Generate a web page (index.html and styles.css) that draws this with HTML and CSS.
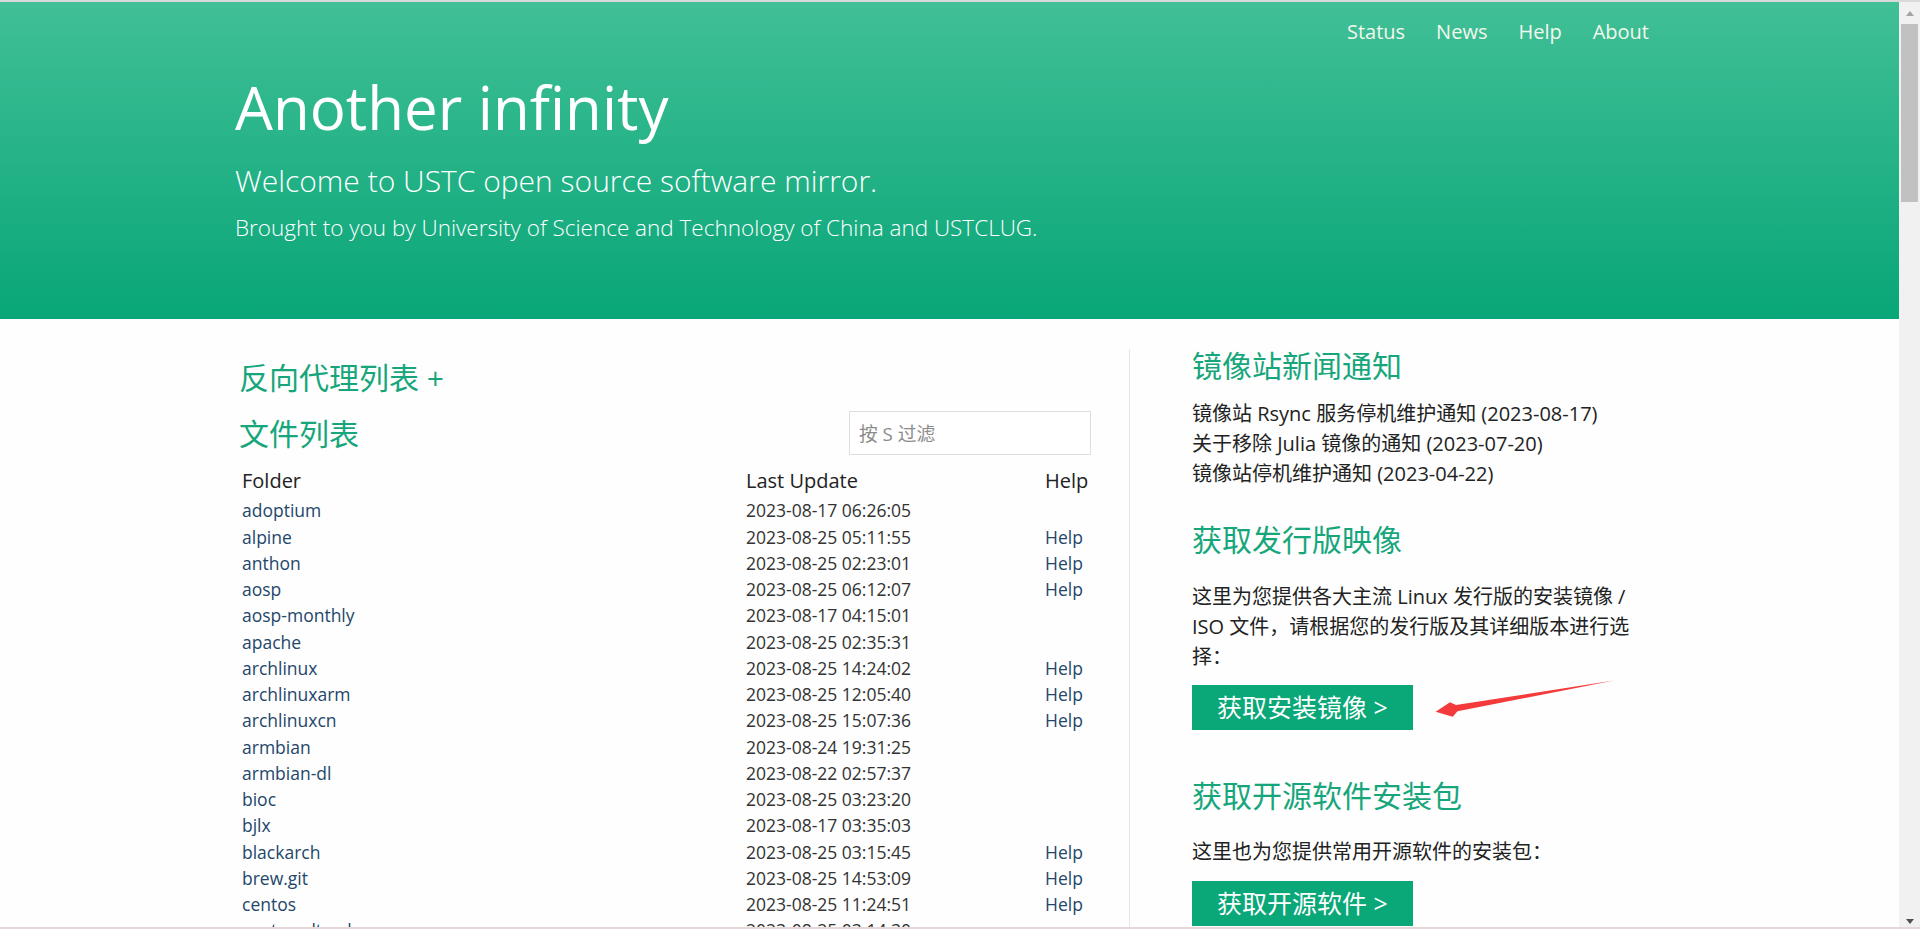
FILE: index.html
```html
<!DOCTYPE html>
<html lang="zh-CN">
<head>
<meta charset="utf-8">
<title>USTC Open Source Software Mirror</title>
<link rel="stylesheet" href="styles.css">
</head>
<body>
<div class="frame-top"></div>
<div class="viewport">
  <div class="page">
    <header class="hero">
      <nav class="container nav">
        <a href="#">Status</a>
        <a href="#">News</a>
        <a href="#">Help</a>
        <a href="#">About</a>
      </nav>
      <div class="container hero-text">
        <h1>Another infinity</h1>
        <p class="lead">Welcome to USTC open source software mirror.</p>
        <p class="sub">Brought to you by University of Science and Technology of China and USTCLUG.</p>
      </div>
    </header>
    <main class="container content">
      <section class="list-col">
        <h2 class="title proxy">反向代理列表 +</h2>
        <div class="list-head">
          <h2 class="title">文件列表</h2>
          <input class="filter" type="text" placeholder="按 S 过滤">
        </div>
        <table class="files">
          <colgroup><col class="c-name"><col class="c-date"><col class="c-help"></colgroup>
          <thead>
            <tr><th>Folder</th><th>Last Update</th><th>Help</th></tr>
          </thead>
          <tbody>
            <tr><td><a href="#">adoptium</a></td><td>2023-08-17 06:26:05</td><td></td></tr>
            <tr><td><a href="#">alpine</a></td><td>2023-08-25 05:11:55</td><td><a href="#">Help</a></td></tr>
            <tr><td><a href="#">anthon</a></td><td>2023-08-25 02:23:01</td><td><a href="#">Help</a></td></tr>
            <tr><td><a href="#">aosp</a></td><td>2023-08-25 06:12:07</td><td><a href="#">Help</a></td></tr>
            <tr><td><a href="#">aosp-monthly</a></td><td>2023-08-17 04:15:01</td><td></td></tr>
            <tr><td><a href="#">apache</a></td><td>2023-08-25 02:35:31</td><td></td></tr>
            <tr><td><a href="#">archlinux</a></td><td>2023-08-25 14:24:02</td><td><a href="#">Help</a></td></tr>
            <tr><td><a href="#">archlinuxarm</a></td><td>2023-08-25 12:05:40</td><td><a href="#">Help</a></td></tr>
            <tr><td><a href="#">archlinuxcn</a></td><td>2023-08-25 15:07:36</td><td><a href="#">Help</a></td></tr>
            <tr><td><a href="#">armbian</a></td><td>2023-08-24 19:31:25</td><td></td></tr>
            <tr><td><a href="#">armbian-dl</a></td><td>2023-08-22 02:57:37</td><td></td></tr>
            <tr><td><a href="#">bioc</a></td><td>2023-08-25 03:23:20</td><td></td></tr>
            <tr><td><a href="#">bjlx</a></td><td>2023-08-17 03:35:03</td><td></td></tr>
            <tr><td><a href="#">blackarch</a></td><td>2023-08-25 03:15:45</td><td><a href="#">Help</a></td></tr>
            <tr><td><a href="#">brew.git</a></td><td>2023-08-25 14:53:09</td><td><a href="#">Help</a></td></tr>
            <tr><td><a href="#">centos</a></td><td>2023-08-25 11:24:51</td><td><a href="#">Help</a></td></tr>
            <tr><td><a href="#">centos-altarch</a></td><td>2023-08-25 03:14:30</td><td></td></tr>
          </tbody>
        </table>
      </section>
      <aside class="side-col">
        <h2 class="title">镜像站新闻通知</h2>
        <ul class="news">
          <li>镜像站 Rsync 服务停机维护通知 (2023-08-17)</li>
          <li>关于移除 Julia 镜像的通知 (2023-07-20)</li>
          <li>镜像站停机维护通知 (2023-04-22)</li>
        </ul>
        <h2 class="title side-h">获取发行版映像</h2>
        <p class="side-p">这里为您提供各大主流 Linux 发行版的安装镜像 / ISO 文件，请根据您的发行版及其详细版本进行选择：</p>
        <div class="cta">
          <a class="btn" href="#">获取安装镜像 &gt;</a>
          <svg class="annot" width="190" height="50" viewBox="0 0 190 50" aria-hidden="true">
            <polygon points="184,5.5 26,30 20,27.3 5.7,36.7 22.7,41.7 27.5,36.2" fill="#f43a3a"/>
          </svg>
        </div>
        <h2 class="title side-h2">获取开源软件安装包</h2>
        <p class="side-p2">这里也为您提供常用开源软件的安装包：</p>
        <div class="cta cta2">
          <a class="btn" href="#">获取开源软件 &gt;</a>
        </div>
      </aside>
    </main>
  </div>
  <div class="scrollbar">
    <div class="sb-btn"><span class="tri-up"></span></div>
    <div class="sb-thumb"></div>
    <div class="sb-fill"></div>
    <div class="sb-btn"><span class="tri-down"></span></div>
  </div>
</div>
<div class="frame-bottom"></div>
</body>
</html>
```

FILE: styles.css
```css
* { box-sizing: border-box; }

html, body {
  margin: 0;
  height: 100%;
}

body {
  font-family: "Open Sans", "Noto Sans CJK SC", sans-serif;
  color: #333;
  background: #fdfefd;
  overflow: hidden;
  display: flex;
  flex-direction: column;
}

a { text-decoration: none; }

.frame-top { flex: none; height: 2px; background: #d9d9d9; }
.frame-bottom { flex: none; height: 2px; background: #e6d6d6; }

.viewport {
  flex: 1;
  min-height: 0;
  display: flex;
}

.page {
  flex: 1;
  min-width: 0;
  overflow: hidden;
}

.container {
  width: 1414px;
  margin-left: 235px;
}

/* ---------- hero ---------- */
.hero {
  height: 317px;
  padding-top: 14.5px;
  background: linear-gradient(#41bf96, #08a678);
  color: #fff;
}

.nav {
  display: flex;
  justify-content: flex-end;
  gap: 31px;
  font-size: 20px;
  line-height: 30px;
}

.nav a { color: #f3f8ec; }

.hero-text h1 {
  margin: 27.2px 0 0;
  font-size: 60px;
  line-height: 66px;
  font-weight: 400;
}

.hero-text .lead {
  margin: 24.2px 0 0;
  font-size: 30px;
  line-height: 33px;
  font-weight: 300;
}

.hero-text .sub {
  margin: 14.5px 0 0;
  font-size: 22.5px;
  line-height: 33.75px;
  font-weight: 300;
}

/* ---------- content ---------- */
.content {
  display: flex;
  align-items: flex-start;
  padding-top: 30px;
}

.title {
  margin: 0;
  font-size: 30px;
  line-height: 33px;
  font-weight: 400;
  color: #17a67b;
}

.list-col {
  width: 894px;
  padding: 0 38px 0 4px;
}

.proxy { margin-top: 12px; }

.list-head {
  margin-top: 17px;
  height: 44px;
  display: flex;
  align-items: center;
  justify-content: space-between;
}

.filter {
  width: 242px;
  height: 44px;
  border: 1px solid #dedede;
  background: #fff;
  padding: 0 9px;
  font-family: "Open Sans", "Noto Sans CJK SC", sans-serif;
  font-size: 18.75px;
  color: #333;
  outline: none;
}
.filter::placeholder { color: #8c8c8c; }

.files {
  margin-top: 11px;
  width: 852px;
  border-collapse: collapse;
  table-layout: fixed;
}

.c-name { width: 504px; }
.c-date { width: 299px; }
.c-help { width: 49px; }

.files th {
  text-align: left;
  font-weight: 400;
  font-size: 20px;
  line-height: 30px;
  padding: 0 3px 1.4px;
  color: #222;
  white-space: nowrap;
}

.files td {
  font-size: 17.5px;
  line-height: 26.25px;
  padding: 0 3px;
  color: #333;
  white-space: nowrap;
}

.files a { color: #24466b; }

/* ---------- side column ---------- */
.side-col {
  width: 516px;
  border-left: 1px solid #e6e6e6;
  padding: 0 0 0 62px;
  min-height: 600px;
}

.news {
  list-style: none;
  margin: 17px 0 0;
  padding: 0;
  font-size: 20px;
  line-height: 30px;
  color: #222;
}

.side-h { margin-top: 34px; }

.side-p {
  margin: 26px 0 0;
  width: 452px;
  font-size: 20px;
  line-height: 30px;
  color: #222;
}

.cta {
  position: relative;
  margin-top: 13px;
}

.cta2 { margin-top: 14px; }

.btn {
  display: inline-block;
  height: 45px;
  padding: 0 25px;
  background: #0aa778;
  color: #fff;
  font-size: 25px;
  line-height: 45px;
}

.annot {
  position: absolute;
  left: 238px;
  top: -10px;
}

.side-h2 { margin-top: 49px; }

.side-p2 {
  margin: 25px 0 0;
  font-size: 20px;
  line-height: 30px;
  color: #222;
}

/* ---------- scrollbar ---------- */
.scrollbar {
  flex: none;
  width: 21px;
  background: #f1f1f1;
  display: flex;
  flex-direction: column;
  align-items: center;
}

.sb-btn {
  flex: none;
  height: 20px;
  width: 100%;
  display: flex;
  align-items: center;
  justify-content: center;
}

.tri-up {
  width: 0;
  height: 0;
  border-left: 4.5px solid transparent;
  border-right: 4.5px solid transparent;
  border-bottom: 5px solid #a3a3a3;
  margin-top: 2px;
}

.tri-down {
  width: 0;
  height: 0;
  border-left: 4.5px solid transparent;
  border-right: 4.5px solid transparent;
  border-top: 5px solid #505050;
  margin-top: 8px;
}

.sb-thumb {
  flex: none;
  width: 17px;
  height: 178px;
  margin-top: 2px;
  background: #c1c1c1;
}

.sb-fill { flex: 1; }
```
